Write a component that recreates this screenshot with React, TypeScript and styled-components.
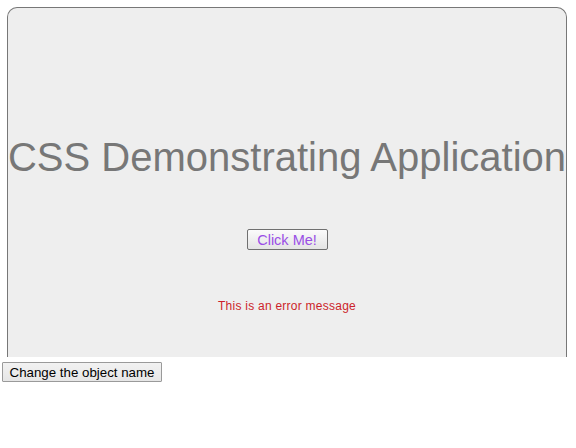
import { useState } from 'react';
import styled, { createGlobalStyle } from 'styled-components';

const GlobalStyle = createGlobalStyle`
  body {
    margin: 0;
    background: #ffffff;
    font-family: 'Liberation Sans', Arial, sans-serif;
  }
`;

function App() {
  const [objectName, setObjectName] = useState('CSS Demonstrating Application');

  return (
    <Page>
      <GlobalStyle />
      <Panel>
        <Heading>{objectName}</Heading>
        <ClickButton>Click Me!</ClickButton>
        <ErrorMessage>This is an error message</ErrorMessage>
      </Panel>
      <ChangeButton onClick={() => setObjectName(objectName)}>Change the object name</ChangeButton>
    </Page>
  );
}

export default App;

const Page = styled.div`
  display: flex;
  flex-direction: column;
  align-items: flex-start;
  padding: 7px 0 0 2px;
`;

const Panel = styled.div`
  box-sizing: border-box;
  width: 560px;
  height: 350px;
  margin-left: 5px;
  display: flex;
  flex-direction: column;
  align-items: center;
  padding-top: 126px;
  background-color: #eeeeee;
  border: 1px solid #777777;
  border-bottom: none;
  border-radius: 10px 10px 0 0;
`;

const Heading = styled.h1`
  margin: 0;
  font-size: 40px;
  font-weight: 400;
  line-height: 46px;
  color: #777777;
  white-space: nowrap;
`;

const ClickButton = styled.button`
  margin-top: 49px;
  width: 81px;
  height: 21px;
  padding: 0;
  font-family: 'Liberation Sans', Arial, sans-serif;
  font-size: 14.5px;
  color: #9a4ee6;
  background: linear-gradient(#fbfbfb, #e4e4e4);
  border: 1px solid #707070;
  border-radius: 2px;
  cursor: pointer;
`;

const ErrorMessage = styled.p`
  margin: 49px 0 0;
  font-size: 12px;
  line-height: 14px;
  letter-spacing: 0.25px;
  color: #cc1f2a;
`;

const ChangeButton = styled.button`
  margin-top: 5px;
  width: 160px;
  height: 20px;
  padding: 0;
  font-family: 'Liberation Sans', Arial, sans-serif;
  font-size: 13.3px;
  color: #000000;
  background: linear-gradient(#f2f2f2, #e6e6e6);
  border: 1px solid #9a9a9a;
  border-radius: 1px;
  cursor: pointer;
`;
